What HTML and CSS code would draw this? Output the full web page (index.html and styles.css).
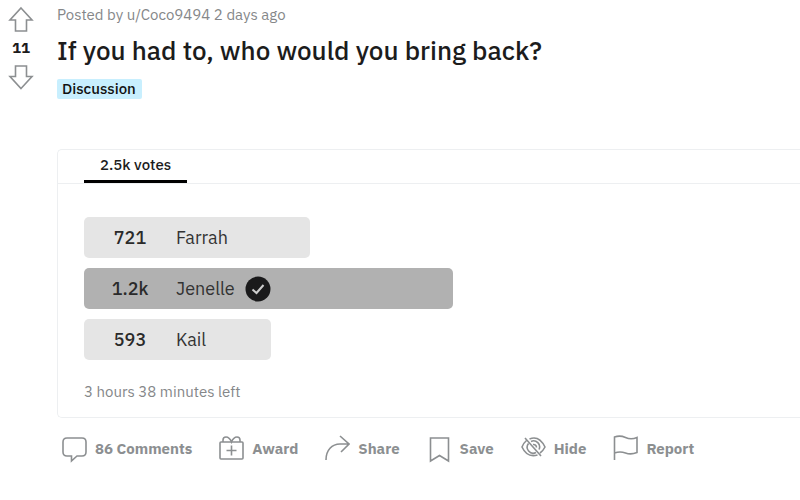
FILE: index.html
```html
<!DOCTYPE html>
<html lang="en">
<head>
    <meta charset="utf-8">
    <title>If you had to, who would you bring back?</title>
    <link rel="stylesheet" href="styles.css">
</head>
<body>
    <div class="post">
        <div class="vote-column">
            <button class="vote" type="button" aria-label="Upvote">
                <svg width="26" height="26" viewBox="0 0 26 26"><path d="M13 2 L24 14 H18.5 V25 H7.5 V14 H2 Z"/></svg>
            </button>
            <span class="score">11</span>
            <button class="vote" type="button" aria-label="Downvote">
                <svg width="26" height="26" viewBox="0 0 26 26"><path d="M13 24.5 L24 12.5 H18.5 V2 H7.5 V12.5 H2 Z"/></svg>
            </button>
        </div>
        <div class="content">
            <div class="byline">Posted by u/Coco9494 2 days ago</div>
            <h1>If you had to, who would you bring back?</h1>
            <a class="flair" href="#">Discussion</a>

            <div class="poll">
                <div class="poll-tabs">
                    <button class="tab" type="button">2.5k votes</button>
                </div>
                <ul class="options">
                    <li class="option" style="width: 31.6%"><span class="count">721</span><span class="name">Farrah</span></li>
                    <li class="option winner" style="width: 51.6%">
                        <span class="count">1.2k</span><span class="name">Jenelle</span>
                        <svg class="check" width="26" height="26" viewBox="0 0 26 26"><circle cx="13" cy="13" r="12.5"/><path d="M7.5 13.5 L11.5 17 L18.5 9"/></svg>
                    </li>
                    <li class="option" style="width: 26.1%"><span class="count">593</span><span class="name">Kail</span></li>
                </ul>
                <div class="time-left">3 hours 38 minutes left</div>
            </div>

            <div class="actions">
                <a href="#">
                    <svg width="25" height="28" viewBox="0 0 25 28"><path d="M5 3 H20 Q24 3 24 7 V17 Q24 21 20 21 H15 L9.5 26 V21 H5 Q1 21 1 17 V7 Q1 3 5 3 Z"/></svg>
                    86 Comments
                </a>
                <button type="button">
                    <svg width="25" height="28" viewBox="0 0 25 28"><rect x="1" y="7" width="23" height="17" rx="1"/><path d="M12.5 10.5 V20.5 M7.5 15.5 H17.5 M4 7 V5 Q4 2 7 2 Q10.5 2 12.5 7 Q14.5 2 18 2 Q21 2 21 5 V7"/></svg>
                    Award
                </button>
                <button type="button">
                    <svg width="25" height="28" viewBox="0 0 25 28"><path d="M1 25 C1 15 7 9 15 9 H24 M15 1 L24 9 L16 17"/></svg>
                    Share
                </button>
                <button type="button">
                    <svg width="25" height="28" viewBox="0 0 25 28"><path d="M3.5 3 H21.5 V26 L12.5 20.5 L3.5 26 Z"/></svg>
                    Save
                </button>
                <button type="button">
                    <svg class="eye" width="25" height="28" viewBox="0 0 25 28"><path d="M8.5 4 Q18 0 24 12 Q22 16 19 18 M16.5 20 Q6 23 1 12 Q2.5 8 5.5 5.5 M4 3 L20 21 M7.5 8.5 A6 6 0 0 0 15 17.5 M10 6.5 A6 6 0 0 1 18 14.5 M12 9.5 A3 3 0 0 1 15.5 12.5"/></svg>
                    Hide
                </button>
                <button type="button">
                    <svg width="25" height="28" viewBox="0 0 25 28"><path d="M1.5 25 V2 Q7 0 12.5 2.5 Q18 5 24 2.5 V17.5 Q18 20 12.5 18 Q7 16 1.5 18"/></svg>
                    Report
                </button>
            </div>
        </div>
    </div>
</body>
</html>
```
FILE: styles.css
```css
body {
    margin: 0;
    background: #fff;
    color: #1c1c1c;
    font-family: "IBM Plex Sans", "Noto Sans", sans-serif;
    overflow-x: hidden;
}

button {
    font-family: inherit;
    background: none;
    border: none;
    padding: 0;
    cursor: pointer;
}

svg {
    display: block;
    fill: none;
    stroke: #8c8f91;
    stroke-width: 1.6;
    flex-shrink: 0;
}

.post {
    display: flex;
}

.vote-column {
    display: flex;
    flex-direction: column;
    align-items: center;
    width: 42px;
    padding: 6px 15px 0 0;
}

.score {
    font-size: 15px;
    line-height: 32px;
    font-weight: 700;
}

.content {
    flex: 1;
    min-width: 0;
    padding-top: 5px;
}

.byline {
    font-size: 15px;
    line-height: 20px;
    color: #858789;
}

h1 {
    margin: 7px 0 11px;
    font-size: 26px;
    line-height: 36px;
    font-weight: 500;
}

.flair {
    display: block;
    width: fit-content;
    padding: 0 6px 0 5px;
    border-radius: 2px;
    background: #c8effe;
    color: #111;
    font-size: 15px;
    line-height: 20px;
    font-weight: 500;
    text-decoration: none;
}

.poll {
    margin-top: 50px;
    border: 1px solid #edeff1;
    border-right: none;
    border-radius: 5px 0 0 5px;
}

.poll-tabs {
    display: flex;
    padding-left: 26px;
    border-bottom: 1px solid #edeff1;
}

.tab {
    padding: 0 16px;
    border-bottom: 3px solid #000;
    color: #1c1c1c;
    font-size: 15px;
    line-height: 30px;
    font-weight: 500;
}

.options {
    display: flex;
    flex-direction: column;
    gap: 10px;
    margin: 0;
    padding: 33px 0 0 26px;
    list-style: none;
}

.option {
    display: flex;
    align-items: center;
    height: 41px;
    border-radius: 5px;
    background: #e5e5e5;
    font-size: 18px;
}

.winner {
    background: #b1b1b1;
}

.count {
    width: 92px;
    text-align: center;
    font-weight: 500;
    color: #2a2a2a;
}

.name {
    color: #333;
}

.check {
    margin-left: 10px;
}

.check circle {
    fill: #1a1a1b;
    stroke: none;
}

.check path {
    stroke: #ccc;
    stroke-width: 2;
}

.time-left {
    padding: 22px 26px 15px;
    color: #858789;
    font-size: 15px;
    line-height: 20px;
}

.actions {
    display: flex;
    gap: 27px;
    padding: 17px 5px;
}

.actions a,
.actions button {
    display: flex;
    align-items: center;
    gap: 8px;
    color: #8c8f91;
    font-size: 15px;
    line-height: 28px;
    font-weight: 700;
    text-decoration: none;
    white-space: nowrap;
}
```
